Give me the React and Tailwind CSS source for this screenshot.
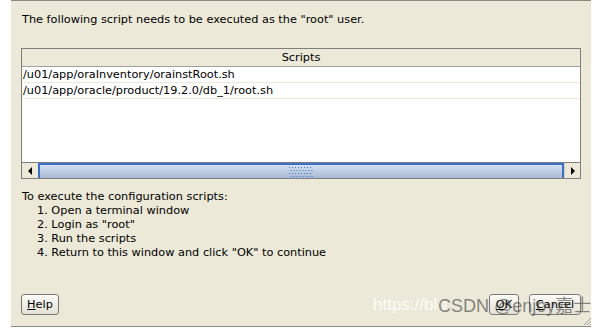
export default function App() {
  const font = { fontFamily: '"DejaVu Sans", Verdana, sans-serif' };
  return (
    <div className="w-[604px] h-[330px] bg-white relative overflow-hidden" style={font}>
      <div className="ml-[11px] w-[580px] h-[327px] bg-[#ece9d8] border-t border-b border-[#8a8a86] flex flex-col text-[11.3px] text-black">
        <div className="pl-[11px] pt-[12px] h-[47px] leading-[14px]">The following script needs to be executed as the "root" user.</div>
        <div className="ml-[10px] w-[560px] h-[131px] border border-[#7f7f7f] bg-white flex flex-col">
          <div className="h-[18px] bg-[#ece9d8] border-b border-[#a0a0a0] flex items-center justify-center leading-[14px]">Scripts</div>
          <div className="h-[16px] border-b border-[#ece9d8] pl-[1px] leading-[15px]">/u01/app/oraInventory/orainstRoot.sh</div>
          <div className="h-[16px] border-b border-[#ece9d8] pl-[1px] leading-[15px]">/u01/app/oracle/product/19.2.0/db_1/root.sh</div>
          <div className="flex-1" />
          <div className="h-[16px] border-t border-[#7f7f7f] flex bg-[#ece9d8]">
            <div className="w-[16px] flex items-center justify-center">
              <svg width="6" height="8" viewBox="0 0 6 8"><path d="M5 0 L5 8 L1 4 Z" fill="#000" /></svg>
            </div>
            <div className="flex-1 border-t-2 border-l-2 border-r-2 border-[#3c6fc8] bg-gradient-to-b from-[#d4e0f2] to-[#a9b9d2] flex items-center justify-center">
              <svg width="24" height="10" viewBox="0 0 24 10">
                {[0, 1, 2, 3, 4, 5, 6, 7].map((i) => (
                  <g key={i}>
                    <rect x={i * 3} y={0} width="1" height="1" fill="#3e6fd0" />
                    <rect x={i * 3 + 1.5} y={3} width="1" height="1" fill="#3e6fd0" />
                    <rect x={i * 3} y={6} width="1" height="1" fill="#3e6fd0" />
                    <rect x={i * 3 + 1.5} y={9} width="1" height="1" fill="#3e6fd0" />
                  </g>
                ))}
              </svg>
            </div>
            <div className="w-[16px] flex items-center justify-center border-l border-[#d0cfc8]">
              <svg width="6" height="8" viewBox="0 0 6 8"><path d="M1 0 L1 8 L5 4 Z" fill="#000" /></svg>
            </div>
          </div>
        </div>
        <div className="pl-[11px] pt-[11px] leading-[14px]">
          <div>To execute the configuration scripts:</div>
          <div className="pl-[15px]">1. Open a terminal window</div>
          <div className="pl-[15px]">2. Login as "root"</div>
          <div className="pl-[15px]">3. Run the scripts</div>
          <div className="pl-[15px]">4. Return to this window and click "OK" to continue</div>
        </div>
        <div className="flex-1" />
        <div className="flex items-center px-[10px] pb-[11px]">
          <button className="w-[38px] h-[21px] border border-[#7a7a7a] rounded-[3px] bg-gradient-to-b from-[#fbfbf8] to-[#e3e1d6] text-[11.3px] leading-none"><span className="underline">H</span>elp</button>
          <div className="flex-1" />
          <button className="w-[30px] h-[21px] border border-[#7a7a7a] rounded-[3px] bg-gradient-to-b from-[#fbfbf8] to-[#e3e1d6] text-[11.3px] leading-none mr-[10px]"><span className="underline">O</span>K</button>
          <button className="w-[52px] h-[21px] border border-[#7a7a7a] rounded-[3px] bg-gradient-to-b from-[#fbfbf8] to-[#e3e1d6] text-[11.3px] leading-none"><span className="underline">C</span>ancel</button>
        </div>
      </div>
      <svg className="absolute left-[584px] top-[317px]" width="8" height="9" viewBox="0 0 8 9">
        <path d="M7 1 L0 8 M7 4 L3 8 M7 7 L6 8" stroke="#a0a0a0" strokeWidth="1" />
      </svg>
      <div className="absolute left-[373px] top-[295px] text-[17px] leading-[20px] whitespace-nowrap" style={{ fontFamily: '"Liberation Sans", Arial, sans-serif' }}>
        <span className="text-white/80">https://blo</span>
      </div>
      <div className="absolute left-[438px] top-[295px] text-[18px] leading-[22px] whitespace-nowrap text-[#3a3a3a]/60" style={{ fontFamily: '"Liberation Sans", "Noto Sans CJK SC", sans-serif' }}>
        CSDN @enjoy嘉士
      </div>
    </div>
  );
}
